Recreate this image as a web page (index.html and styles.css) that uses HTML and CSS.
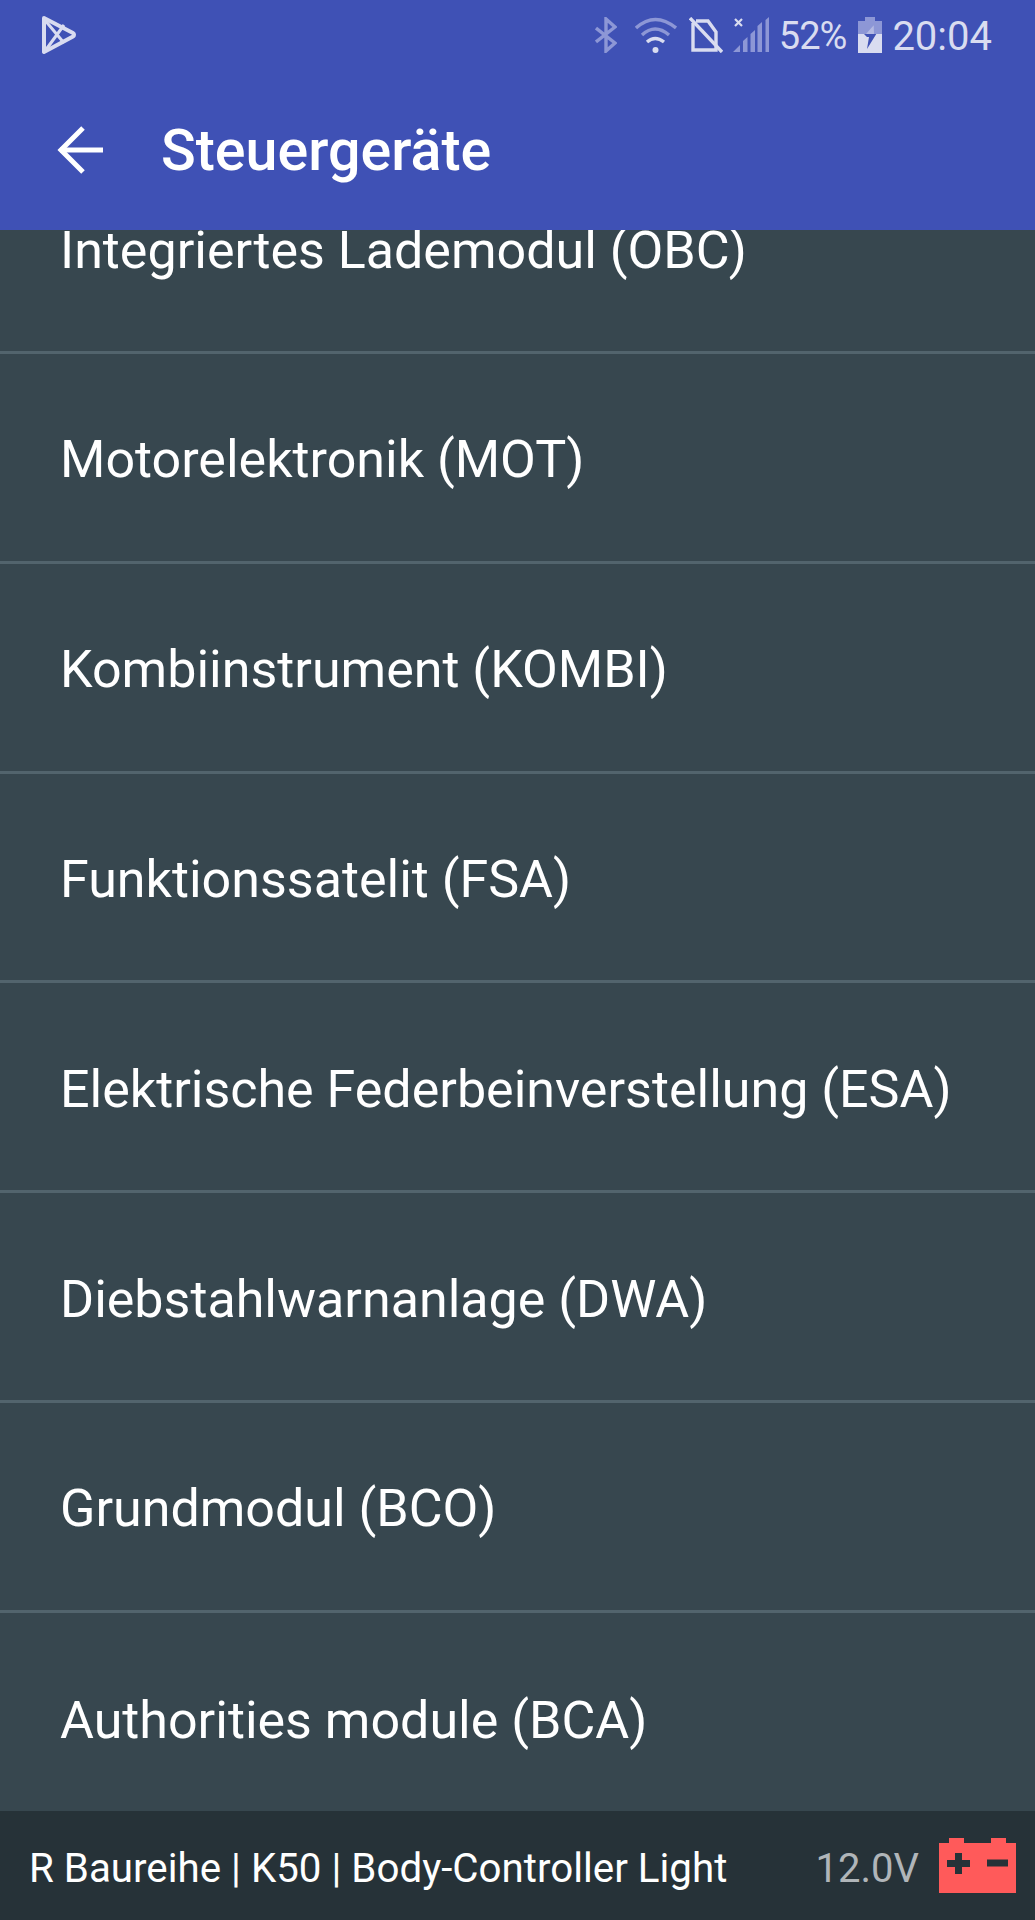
FILE: index.html
```html
<!DOCTYPE html>
<html lang="de">
<head>
  <meta charset="UTF-8">
  <title>Steuergeräte</title>
  <link rel="stylesheet" href="styles.css">
</head>
<body>
  <div class="screen">
    <header class="appbar">
      <!-- status bar -->
      <div class="statusbar">
        <svg class="play-icon" width="40" height="42" viewBox="0 0 40 42" fill="none" stroke="#d9dcf0" stroke-width="4" stroke-linejoin="round">
          <path d="M4 4 L33 19 a2 2 0 0 1 0 3.5 L4 38 Z"/>
          <path d="M4 5 L24 29 M5 37 L24 11" stroke-width="3"/>
        </svg>
        <div class="status-right">
          <svg width="22" height="36" viewBox="0 0 22 36" fill="none" stroke="#8d97d6" stroke-width="3.4">
            <path d="M1 11 L20 26 L11 34 V2 L20 10 L1 25"/>
          </svg>
          <svg class="ml-wifi" width="42" height="36" viewBox="0 0 42 36" fill="none">
            <path d="M1 11 Q20 -6 41 11" stroke="#8d97d6" stroke-width="3.4"/>
            <path d="M7 18 Q20 6 34 18" stroke="#8d97d6" stroke-width="3.4"/>
            <path d="M12 25 Q20 18 29 25" stroke="#d9dcf0" stroke-width="3.4"/>
            <circle cx="20.5" cy="33" r="3" fill="#d9dcf0"/>
          </svg>
          <svg class="ml-sim" width="34" height="36" viewBox="0 0 34 36" fill="none" stroke="#d9dcf0" stroke-width="3.4">
            <path d="M4 6 V33 H27 V15 L19 4 H7"/>
            <path d="M1 1 L33 35"/>
          </svg>
          <svg width="37" height="36" viewBox="0 0 37 36">
            <path d="M2 2 L9 9 M9 2 L2 9" stroke="#d9dcf0" stroke-width="2.2"/>
            <path d="M0 35 L7 28 V35 Z M10 35 V24 L14.5 20 V35 Z M17.5 35 V17 L22 13 V35 Z M24.5 35 V9 L29 5 V35 Z M32.5 35 V3 L36 0 V35 Z" fill="#8d97d6"/>
          </svg>
          <span class="status-pct">52%</span>
          <svg class="ml-batt" width="24" height="36" viewBox="0 0 24 36">
            <path d="M7 0 H17 V4 H24 V17 H0 V4 H7 Z" fill="#8d97d6"/>
            <path d="M0 17 H24 V36 H0 Z" fill="#d9dcf0"/>
            <path d="M16 17 L6 17 L9 20 H11 L9 32 L18.3 17 Z" fill="#3f51b5"/>
            <path d="M15.7 8.3 L8 17 H16 Z" fill="#d9dcf0" opacity="0.5"/>
          </svg>
          <span class="status-time">20:04</span>
        </div>
      </div>
      <!-- toolbar -->
      <div class="toolbar">
        <svg class="back-icon" width="48" height="48" viewBox="0 0 48 48" fill="none" stroke="#fff" stroke-width="5">
          <path d="M46 24 H3"/>
          <path d="M26 2 L4 24 L26 46"/>
        </svg>
        <h1 class="title">Steuergeräte</h1>
      </div>
    </header>

    <div class="list">
      <div class="row row-first">Integriertes Lademodul (OBC)</div>
      <div class="row">Motorelektronik (MOT)</div>
      <div class="row">Kombiinstrument (KOMBI)</div>
      <div class="row">Funktionssatelit (FSA)</div>
      <div class="row">Elektrische Federbeinverstellung (ESA)</div>
      <div class="row">Diebstahlwarnanlage (DWA)</div>
      <div class="row">Grundmodul (BCO)</div>
      <div class="row row-last">Authorities module (BCA)</div>
    </div>

    <footer class="footer">
      <span class="footer-text">R Baureihe | K50 | Body-Controller Light</span>
      <span class="voltage">12.0V</span>
      <svg width="77" height="55" viewBox="0 0 77 55">
        <path d="M10 0 H25 V5 H52 V0 H67 V5 H77 V55 H0 V5 H10 Z" fill="#ff5a5a"/>
        <path d="M8 22 H16 V15 H23 V22 H31 V29 H23 V36 H16 V29 H8 Z" fill="#263238"/>
        <path d="M48 21.5 H69 V28.5 H48 Z" fill="#263238"/>
      </svg>
    </footer>
  </div>
</body>
</html>
```

FILE: styles.css
```css
body {
  margin: 0;
  font-family: Roboto, sans-serif;
  background-color: #37474f;
}

.screen {
  width: 1035px;
  height: 1920px;
  display: flex;
  flex-direction: column;
  overflow: hidden;
}

.appbar {
  height: 230px;
  flex-shrink: 0;
  background-color: #3f51b5;
}

.statusbar {
  height: 70px;
  display: flex;
  align-items: center;
  justify-content: space-between;
  padding: 0 43px 0 40px;
}

.status-right {
  display: flex;
  align-items: center;
  gap: 10px;
  color: #d9dcf0;
}

.ml-wifi {
  margin-left: 8px;
}

.ml-sim {
  margin-left: 2px;
}

.ml-batt {
  margin-left: 3px;
}

.status-pct {
  margin: 0 -1px;
  padding-top: 2px;
  font-size: 38px;
  letter-spacing: -1px;
}

.status-time {
  padding-top: 2px;
  font-size: 40px;
}

.toolbar {
  height: 160px;
  display: flex;
  align-items: center;
  padding-left: 57px;
}

.title {
  margin: 0 0 0 56px;
  font-size: 57.4px;
  font-weight: 500;
  color: #fff;
}

.list {
  flex: 1;
  overflow: hidden;
  color: #fff;
  font-size: 52px;
}

.row {
  height: 209.8px;
  box-sizing: border-box;
  display: flex;
  align-items: center;
  padding: 5px 0 0 60px;
  border-bottom: 3px solid #52646d;
}

.row-first {
  height: 124px;
  padding: 0 0 80px 60px;
  line-height: 40px;
}

.row-last {
  border-bottom: none;
}

.footer {
  height: 109px;
  flex-shrink: 0;
  display: flex;
  align-items: center;
  padding: 0 19px 0 29px;
  background-color: #263238;
  color: #fff;
  font-size: 40.3px;
}

.footer-text {
  flex: 1;
  padding-top: 5px;
}

.voltage {
  margin-right: 20px;
  padding-top: 5px;
  font-size: 40px;
  color: #b0b5b9;
}
```
